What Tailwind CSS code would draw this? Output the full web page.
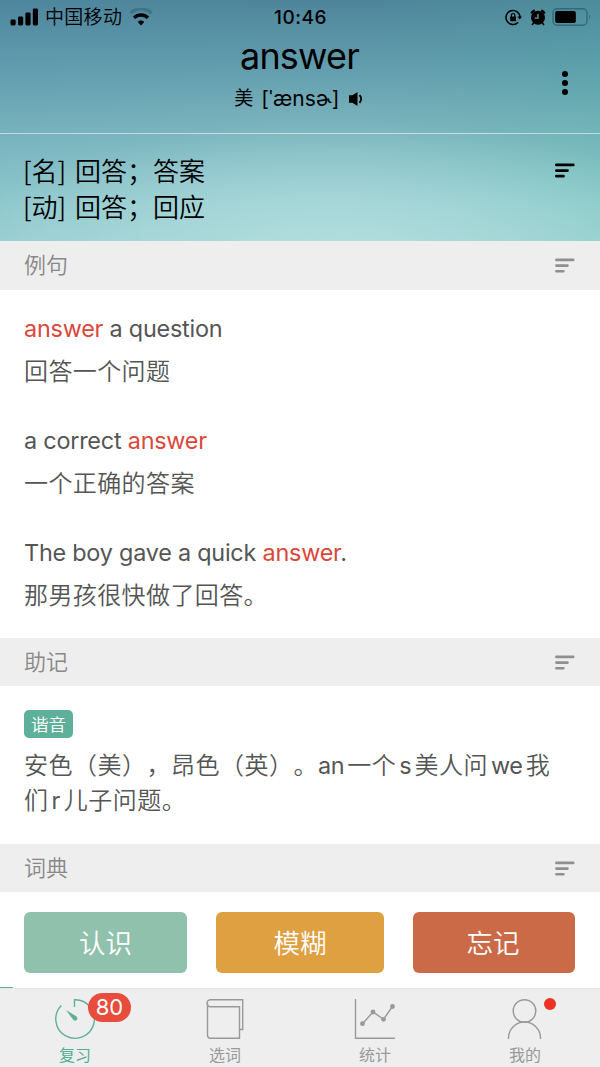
<!DOCTYPE html>
<html lang="zh-CN">
<head>
    <meta charset="UTF-8">
    <meta name="viewport" content="width=device-width, initial-scale=1.0">
    <title>answer</title>
    <script src="https://cdn.jsdelivr.net/npm/@tailwindcss/browser@4"></script>
</head>
<body class="bg-white font-['Inter','Noto_Sans_CJK_SC',sans-serif] text-[#555] [text-spacing-trim:space-all]">
<div class="w-[600px] h-[1067px] flex flex-col overflow-hidden">

    <!-- Word header -->
    <div class="h-[241px] shrink-0 flex flex-col text-black bg-[radial-gradient(ellipse_400px_130px_at_58%_105%,#b9e0e2bb,#b9e0e200),linear-gradient(97deg,#4d90b020_0%,#4d90b000_45%,#3fa08a00_60%,#3fb09a30_100%),linear-gradient(180deg,#4f859b_0%,#609bac_25%,#7ab3bc_52%,#88c1c7_68%,#97cfd0_85%,#a0d4d4_100%)]">
        <!-- Status bar -->
        <div class="h-8 shrink-0 grid grid-cols-3 items-center pl-[10px] pr-[8px]">
            <div class="flex items-center">
                <svg class="w-[28px] h-[18px]" viewBox="0 0 28 18">
                    <rect x="0.5" y="11.5" width="5.2" height="6" rx="1.4"/>
                    <rect x="8" y="8.5" width="5.2" height="9" rx="1.4"/>
                    <rect x="15.4" y="4.6" width="5.2" height="12.9" rx="1.4"/>
                    <rect x="22.8" y="0.6" width="5.2" height="16.9" rx="1.4"/>
                </svg>
                <span class="ml-[7px] pt-[2px] text-[19px] leading-8 tracking-[0.3px] font-[350]">中国移动</span>
                <svg class="ml-[7px] w-[24px] h-[18px]" viewBox="0 0 24 18" fill="none" stroke="#000" stroke-width="3.4">
                    <path d="M1.5 5.2a15 15 0 0 1 21 0" stroke="#3d748a"/>
                    <path d="M5 9.8a10 10 0 0 1 14 0"/>
                    <path d="M12 17.5l-3.2-3.6a4.6 4.6 0 0 1 6.4 0z" fill="#000" stroke="none"/>
                </svg>
            </div>
            <div class="pt-px pr-px text-center text-[19px] font-medium leading-8 tracking-[0.5px]">10:46</div>
            <div class="flex items-center justify-end">
                <svg class="w-[17px] h-[17px]" viewBox="0 0 17 17" fill="none" stroke="#000" stroke-width="1.5">
                    <path d="M13.2 13.2a7 7 0 1 1 1.8-4.7"/>
                    <path d="M12.4 7.6h4.6l-2.3 3z" fill="#000" stroke="none"/>
                    <rect x="5.2" y="7.6" width="5.8" height="4.6" rx="0.6" fill="#000" stroke="none"/>
                    <path d="M6.4 8V6.2a1.7 1.7 0 0 1 3.4 0V8" stroke-width="1.2"/>
                </svg>
                <svg class="ml-[8px] w-[16px] h-[17px]" viewBox="0 0 16 17">
                    <circle cx="8" cy="8.8" r="7"/>
                    <path d="M1.8 3.6L3.8 1.8M14.2 3.6L12.2 1.8" stroke="#000" stroke-width="2.4" stroke-linecap="round"/>
                    <path d="M3.6 14l-1.6 2M12.4 14l1.6 2" stroke="#000" stroke-width="1.5"/>
                    <path d="M8 4.8v4.4H4.6" fill="none" stroke="#6b9cac" stroke-width="1.3"/>
                </svg>
                <svg class="ml-[6px] w-[40px] h-[18px]" viewBox="0 0 40 18">
                    <rect x="1" y="0.8" width="34" height="16.4" rx="4" fill="none" stroke="#33697f" stroke-width="1.4"/>
                    <rect x="3.2" y="3" width="20.6" height="12" rx="1.8"/>
                    <path d="M37 6.2q2 2.8 0 5.6z" fill="#33697f"/>
                </svg>
            </div>
        </div>
        <!-- Word and phonetics -->
        <div class="h-[101px] shrink-0 grid grid-cols-[1fr_auto_1fr] pr-[32px] pl-[31px]">
            <div></div>
            <div class="flex flex-col items-center">
                <h1 class="text-[36px] leading-[49px] tracking-[-0.8px]">answer</h1>
                <div class="flex items-center h-9 pr-px text-[21px]">
                    <span class="pt-px text-[19px]">美</span>
                    <span class="ml-2 tracking-[0.1px]">[ˈænsɚ]</span>
                    <svg class="ml-[8px] w-[16px] h-[16px]" viewBox="0 0 16 16">
                        <path d="M1 4.2h3.4L9.5 1v14l-5.1-3.2H1z"/>
                        <path d="M11.5 4.2q3.4 3.8 0 7.6" fill="none" stroke="#000" stroke-width="1.8"/>
                    </svg>
                </div>
            </div>
            <div class="flex flex-col items-end gap-[3px] pt-[39px]">
                <i class="size-[6px] rounded-full bg-black"></i>
                <i class="size-[6px] rounded-full bg-black"></i>
                <i class="size-[6px] rounded-full bg-black"></i>
            </div>
        </div>
        <div class="h-px shrink-0 bg-white/55"></div>
        <!-- Meanings -->
        <div class="flex justify-between pl-[23px] pr-[25px] pt-[18px] font-['Noto_Sans_CJK_SC',sans-serif] text-[26px] leading-[35.5px] font-[350]">
            <div>
                <div class="flex"><span class="w-[52px]">[名]</span><span>回答；答案</span></div>
                <div class="flex"><span class="w-[52px]">[动]</span><span>回答；回应</span></div>
            </div>
            <svg class="mt-[11px] w-[20px] h-[15px]" viewBox="0 0 20 15" stroke="#000" stroke-width="2.8" stroke-linecap="round"><path d="M1.4 1.9h16.8M1.4 7.6h11.1M1.4 13.2h7"/></svg>
        </div>
    </div>

    <!-- Examples -->
    <div class="h-[49px] shrink-0 flex items-center justify-between pl-6 pr-[25px] bg-[#eee] text-[22px] font-[350] text-[#888]">
        <span>例句</span>
        <svg class="w-[20px] h-[15px]" viewBox="0 0 20 15" stroke="#8f8f8f" stroke-width="2.6" stroke-linecap="round"><path d="M1.4 1.9h16.8M1.4 7.6h11.1M1.4 13.2h7"/></svg>
    </div>
    <div class="h-[348px] shrink-0 flex flex-col gap-[26px] px-6 pt-[17px] text-[24px] leading-[43px]">
        <div>
            <p class="text-[23.4px] tracking-[-0.22px]"><span class="text-[#d9483b]">answer</span> a question</p>
            <p class="tracking-[0.4px] font-[350]">回答一个问题</p>
        </div>
        <div>
            <p class="text-[23.4px] tracking-[-0.22px]">a correct <span class="text-[#d9483b]">answer</span></p>
            <p class="tracking-[0.4px] font-[350]">一个正确的答案</p>
        </div>
        <div>
            <p class="text-[23.4px] tracking-[-0.22px]">The boy gave a quick <span class="text-[#d9483b]">answer</span>.</p>
            <p class="tracking-[0.4px] font-[350]">那男孩很快做了回答。</p>
        </div>
    </div>

    <!-- Mnemonic -->
    <div class="h-[48px] shrink-0 flex items-center justify-between pl-6 pr-[25px] bg-[#eee] text-[22px] font-[350] text-[#888]">
        <span>助记</span>
        <svg class="w-[20px] h-[15px]" viewBox="0 0 20 15" stroke="#8f8f8f" stroke-width="2.6" stroke-linecap="round"><path d="M1.4 1.9h16.8M1.4 7.6h11.1M1.4 13.2h7"/></svg>
    </div>
    <div class="h-[158px] shrink-0 px-6 pt-6">
        <div class="w-[49px] h-[28px] rounded-[5px] bg-[#5eb09a] text-white text-[17.5px] leading-[29px] text-center font-[350]">谐音</div>
        <div class="mt-[10px] text-[24px] leading-[35px] tracking-[0.5px] whitespace-nowrap font-[350]">
            <p>安色（美），昂色（英）。<span class="mr-[3px] font-normal text-[23.4px] tracking-[-0.3px]">an</span>一个<span class="mx-[3px] font-normal text-[23.4px] tracking-[-0.3px]">s</span>美人问<span class="mx-[3px] font-normal text-[23.4px] tracking-[-0.3px]">we</span>我</p>
            <p>们<span class="mx-[3px] font-normal text-[23.4px]">r</span>儿子问题。</p>
        </div>
    </div>

    <!-- Dictionary -->
    <div class="h-[48px] shrink-0 flex items-center justify-between pl-6 pr-[25px] bg-[#eee] text-[22px] font-[350] text-[#888]">
        <span>词典</span>
        <svg class="w-[20px] h-[15px]" viewBox="0 0 20 15" stroke="#8f8f8f" stroke-width="2.6" stroke-linecap="round"><path d="M1.4 1.9h16.8M1.4 7.6h11.1M1.4 13.2h7"/></svg>
    </div>
    <div class="h-[95px] shrink-0 flex gap-[29px] pl-6 pt-5 text-white text-[26.5px] font-[350]">
        <button class="w-[163px] h-[61px] pt-[2px] rounded-[6px] bg-[#90c1ad]">认识</button>
        <button class="w-[168px] h-[61px] pt-[2px] rounded-[6px] bg-[#dfa042]">模糊</button>
        <button class="w-[162px] h-[61px] pt-[2px] pr-[2px] rounded-[6px] bg-[#cb6a47]">忘记</button>
    </div>
    <div class="h-px shrink-0 w-[13px] bg-[#5eb09a]"></div>

    <!-- Tab bar -->
    <div class="grow grid grid-cols-4 bg-[#eee] border-t border-[#e6e6e6] text-[16px] leading-[22px] text-[#999]">
        <div class="relative flex flex-col items-center pt-[9px] text-[#4fae93]">
            <svg class="w-[42px] h-[42px]" viewBox="0 0 42 42" fill="none" stroke="#5eb09a" stroke-width="1.4">
                <path d="M20.5 9V1.7A19.3 19.3 0 1 1 7.3 7.5"/>
                <path d="M12 12l10.2 6.2a2.4 2.4 0 1 1-3.2 3.4z" fill="#5eb09a" stroke="none"/>
            </svg>
            <span class="mt-[4px]">复习</span>
            <span class="absolute left-[88px] top-[4px] w-[43px] h-[29px] rounded-full bg-[#e74c3c] text-white text-[22px] leading-[29px] text-center">80</span>
        </div>
        <div class="flex flex-col items-center pt-[9px]">
            <svg class="w-[42px] h-[42px]" viewBox="0 0 42 42" fill="none" stroke="#999" stroke-width="1.4">
                <path d="M35.5 31.5H38.7V1.7H6.5a3.5 3.5 0 0 0 0 7H35.5V40.3H6.5a3 3 0 0 1-3-3V5"/>
            </svg>
            <span class="mt-[4px]">选词</span>
        </div>
        <div class="flex flex-col items-center pt-[9px]">
            <svg class="w-[42px] h-[42px]" viewBox="0 0 42 42" fill="none" stroke="#999" stroke-width="1.4">
                <path d="M1.5 1v39.3H41"/>
                <path d="M8.500 25.700L19 14l10.500 7.300L38.500 8.500"/>
                <g fill="#999" stroke="none"><circle cx="8.5" cy="25.7" r="2.4"/><circle cx="19" cy="14" r="2.4"/><circle cx="29.5" cy="21.3" r="2.4"/><circle cx="38.5" cy="8.5" r="2.4"/></g>
            </svg>
            <span class="mt-[4px]">统计</span>
        </div>
        <div class="relative flex flex-col items-center pt-[9px]">
            <svg class="w-[42px] h-[42px]" viewBox="0 0 42 42" fill="none" stroke="#999" stroke-width="1.4">
                <circle cx="20.5" cy="13" r="11.3"/>
                <path d="M4.5 41v-1a16 16 0 0 1 32 0v1"/>
            </svg>
            <span class="mt-[4px]">我的</span>
            <i class="absolute left-[94px] top-[9px] size-[12px] rounded-full bg-[#ec3323]"></i>
        </div>
    </div>
</div>
</body>
</html>
